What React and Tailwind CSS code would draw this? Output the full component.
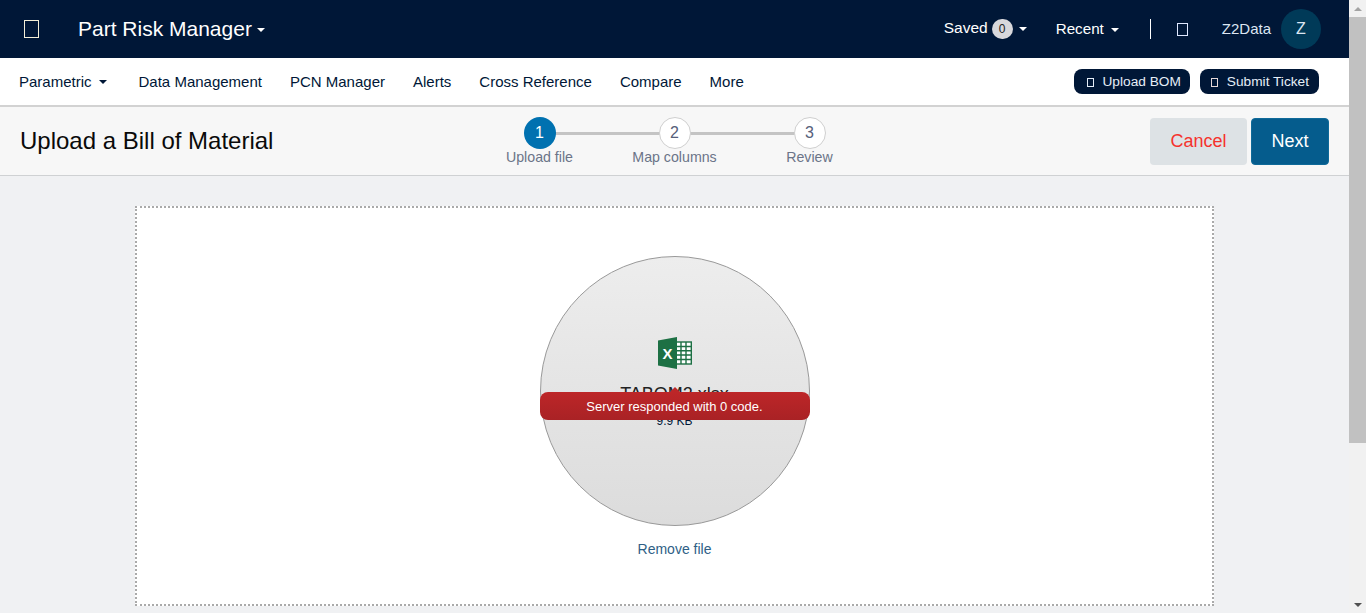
import React from "react";

const Caret = ({ className = "" }) => (
  <span className={`inline-block h-0 w-0 border-x-[4px] border-t-[4px] border-x-transparent border-t-current ${className}`} />
);

// the original page's icon font never loaded, so its glyphs show as empty boxes
const Tofu = ({ className = "" }) => <span className={`inline-block border ${className}`} />;

const ExcelIcon = () => (
  <svg width="34" height="32" viewBox="0 0 34 32">
    <rect x="18" y="5" width="15.3" height="22" fill="#fff" stroke="#1d7044" strokeWidth="1.4" />
    <path d="M18 9.5h15M18 13.8h15M18 18h15M18 22.5h15M23 5v22M28 5v22" stroke="#1d7044" strokeWidth="1.4" />
    <path d="M0 3.5 L19 0 V32 L0 28.5 Z" fill="#1d7044" />
    <text x="9.5" y="21.5" textAnchor="middle" fontFamily="Liberation Sans" fontWeight="700" fontSize="15" fill="#fff">X</text>
  </svg>
);

const navItems = ["Data Management", "PCN Manager", "Alerts", "Cross Reference", "Compare", "More"];

const steps = [
  { n: 1, label: "Upload file", active: true },
  { n: 2, label: "Map columns" },
  { n: 3, label: "Review" },
];

const TopBar = () => (
  <header className="flex h-[58px] shrink-0 items-center bg-[#001737] text-white">
    <Tofu className="ml-6 h-[18px] w-[15px] border-[#f4efd8]" />
    <div className="ml-[39px] -mt-[2px] flex items-center gap-[5px]">
      <span className="text-[21px] leading-none">Part Risk Manager</span>
      <Caret className="mt-[3px]" />
    </div>
    <div className="ml-auto flex items-center pr-7">
      <span className="-mt-[3px] text-[15.5px]">Saved</span>
      <span className="ml-[4px] flex h-5 w-[21px] items-center justify-center rounded-full bg-[#d8d8dc] text-xs text-[#222]">0</span>
      <Caret className="ml-[6px]" />
      <span className="ml-[29px] mt-px text-[15.2px]">Recent</span>
      <Caret className="ml-[7px] mt-px" />
      <span className="ml-[31px] h-5 w-px bg-white" />
      <Tofu className="ml-[26px] h-[13px] w-[11px] border-[#dfe8ff]" />
      <span className="ml-[34px] text-[15px] text-[#dce6f2]">Z2Data</span>
      <span className="ml-[10px] flex h-10 w-10 items-center justify-center rounded-full bg-[#003a58] text-base text-[#dce6f2]">Z</span>
    </div>
  </header>
);

const NavBar = () => (
  <nav className="flex h-[49px] shrink-0 items-center border-b-2 border-[#d2d2d2] bg-white text-[15px] text-[#001737]">
    <span className="ml-[19px] mt-px">Parametric</span>
    <Caret className="ml-[7px]" />
    <div className="ml-[32px] mt-px flex items-center gap-7">
      {navItems.map((item) => (
        <span key={item}>{item}</span>
      ))}
    </div>
    <div className="ml-auto flex items-center gap-[10px] pr-[30px] text-[13.7px] text-[#e6eef8]">
      <span className="flex h-[25px] items-center rounded-lg bg-[#001737] pl-[13px] pr-[9px] pt-px">
        <Tofu className="mr-[8px] h-[9px] w-[7px] border-[#e6eef8]" />
        Upload BOM
      </span>
      <span className="flex h-[25px] items-center rounded-lg bg-[#001737] pl-[11px] pr-[10px] pt-px">
        <Tofu className="mr-[9px] h-[9px] w-[7px] border-[#e6d8d8]" />
        Submit Ticket
      </span>
    </div>
  </nav>
);

const Stepper = () => (
  <div className="ml-[452px] flex">
    {steps.map((step, i) => (
      <div key={step.n} className="relative flex w-[135px] flex-col items-center">
        {i < steps.length - 1 && <span className="absolute left-1/2 top-[15px] h-[3px] w-full bg-[#c4c4c4]" />}
        <span
          className={`relative flex h-8 w-8 items-center justify-center rounded-full text-base ${
            step.active ? "bg-[#0071b0] text-white" : "border border-[#cfcfcf] bg-white text-[#56607a]"
          }`}
        >
          {step.n}
        </span>
        <span className="text-[14.2px] leading-4 text-[#6b7488]">{step.label}</span>
      </div>
    ))}
  </div>
);

const StepBar = () => (
  <div className="flex h-[69px] shrink-0 items-center border-b border-[#cfd1d3] bg-[#f7f7f7] pl-5 pr-5">
    <h1 className="absolute text-2xl text-[#0a0a0a]">Upload a Bill of Material</h1>
    <Stepper />
    <div className="ml-auto flex gap-[4px] text-lg">
      <button className="h-[47px] w-[97px] rounded bg-[#dde2e5] text-[#f5322d]">Cancel</button>
      <button className="h-[47px] w-[78px] rounded border border-[#0f6a99] bg-[#055c8d] font-medium text-white">Next</button>
    </div>
  </div>
);

const FileCircle = () => (
  <div className="relative flex h-[270px] w-[270px] flex-col items-center rounded-full border border-[#999] bg-gradient-to-b from-[#ededed] to-[#dcdcdc] pt-[80px]">
    <ExcelIcon />
    <span className="mt-[15px] text-lg leading-5 text-[#222]">TABOM2.xlsx</span>
    <span className="mt-[9px] text-xs leading-4 text-[#001737]">9.9 KB</span>
    <div className="absolute left-[-1px] top-[135px] flex h-7 w-[270px] items-center justify-center rounded-lg bg-gradient-to-b from-[#bd2628] to-[#a92225] pt-px text-[13px] text-white">
      <span className="absolute -top-[5px] left-1/2 -ml-[5px] h-0 w-0 border-x-[5px] border-b-[5px] border-x-transparent border-b-[#bd2628]" />
      Server responded with 0 code.
    </div>
  </div>
);

const Scrollbar = () => (
  <aside className="flex w-[17px] shrink-0 flex-col bg-[#f1f1f1]">
    <div className="flex h-[17px] items-center justify-center">
      <span className="h-0 w-0 border-x-[4px] border-b-[4px] border-x-transparent border-b-[#a3a3a3]" />
    </div>
    <div className="h-[426px] bg-[#c1c1c1]" />
    <div className="mt-auto flex h-[17px] items-center justify-center">
      <span className="h-0 w-0 border-x-[4px] border-t-[4px] border-x-transparent border-t-[#505050]" />
    </div>
  </aside>
);

export default function App() {
  return (
    <div className="flex h-[613px] overflow-hidden font-['Liberation_Sans',Arial,sans-serif]">
      <main className="flex min-w-0 flex-1 flex-col bg-[#f0f1f3]">
        <TopBar />
        <NavBar />
        <StepBar />
        <section className="ml-[135px] mt-[30px] flex h-[400px] w-[1079px] shrink-0 flex-col items-center border-2 border-dotted border-[#aaa] bg-white pt-[48px]">
          <FileCircle />
          <span className="mt-[15px] text-sm leading-4 text-[#2f5f86]">Remove file</span>
        </section>
      </main>
      <Scrollbar />
    </div>
  );
}
